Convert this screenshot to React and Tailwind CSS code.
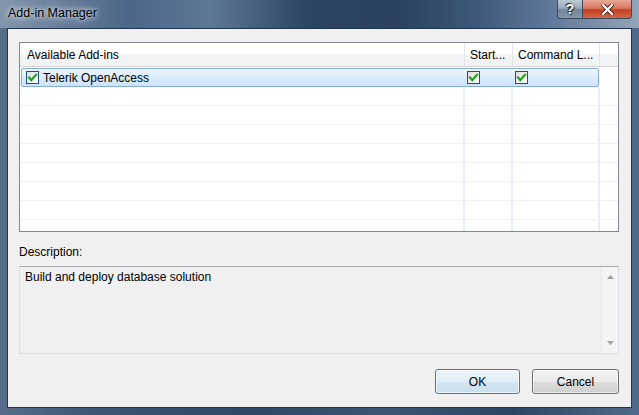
import React from 'react';

const CheckBox = () => (
  <div className="w-[13px] h-[13px] border border-[#1c5180] bg-[linear-gradient(135deg,#dcdcdc,#ffffff)] flex items-center justify-center shrink-0">
    <svg width="11" height="11" viewBox="0 0 11 11">
      <polyline points="2,5.5 4.3,8 9,2.8" fill="none" stroke="#21a121" strokeWidth="2.2" strokeLinecap="square" />
    </svg>
  </div>
);

const EmptyRow = () => (
  <div className="flex h-[19px] border-b border-[#f0f0f0] shrink-0">
    <div className="w-[445px] border-r-2 border-[#e8eef8]" />
    <div className="w-[48px] border-r-2 border-[#e8eef8]" />
    <div className="w-[87px] border-r-2 border-[#e8eef8]" />
    <div className="flex-1" />
  </div>
);

export default function App() {
  return (
    <div className="w-[639px] h-[415px] flex flex-col overflow-hidden text-[12px] text-black font-['Liberation_Sans',Arial,sans-serif] bg-[linear-gradient(90deg,#566d8a_0%,#3c5574_15%,#2f4767_40%,#3b5576_60%,#2d4565_80%,#51698a_100%)]">
      {/* title bar */}
      <div className="h-[28px] flex items-start shrink-0 bg-[linear-gradient(90deg,#8296ac_0%,#6c829d_8%,#4b6686_20%,#5d7797_33%,#2d4565_48%,#2a4161_62%,#3e5979_75%,#60799a_86%,#93a4b8_100%)]">
        <div className="pl-[8px] pt-[6px] leading-[15px] text-[12.5px] [text-shadow:0_0_10px_rgba(255,255,255,0.95),0_0_4px_rgba(255,255,255,0.8)]">
          Add-in Manager
        </div>
        <div className="ml-auto mr-[7px] flex">
          <div className="w-[26px] h-[19px] border border-[#3b4a5c] border-t-0 rounded-bl-[4px] bg-[linear-gradient(180deg,#bfcad6_0%,#9aaabb_45%,#72859a_55%,#8697aa_100%)] flex items-center justify-center">
            <span className="text-white font-bold text-[14px] leading-none [text-shadow:0_0_1px_#1f2c3b,1px_1px_1px_#1f2c3b,-1px_-1px_1px_#1f2c3b]">?</span>
          </div>
          <div className="w-[49px] h-[19px] border border-[#3b4a5c] border-t-0 border-l-0 rounded-br-[4px] bg-[linear-gradient(180deg,#e9a797_0%,#d97a64_45%,#c53f22_55%,#d2674a_100%)] flex items-center justify-center">
            <svg width="13" height="11" viewBox="0 0 13 11">
              <path d="M2 1 L11 10 M11 1 L2 10" stroke="#4a2216" strokeWidth="4" strokeLinecap="square" />
              <path d="M2 1 L11 10 M11 1 L2 10" stroke="#ffffff" strokeWidth="2.2" strokeLinecap="square" />
            </svg>
          </div>
        </div>
      </div>

      {/* client area */}
      <div className="flex-1 mx-[7px] mb-[7px] border border-[#24344a] bg-[#f0f0f0] flex flex-col pl-[11px] pr-[12px] pt-[13px]">
        {/* list view */}
        <div className="w-[600px] h-[190px] border border-[#828790] bg-white flex flex-col overflow-hidden shrink-0">
          <div className="flex h-[24px] border-b border-[#d5d5d5] bg-[linear-gradient(180deg,#ffffff_0%,#ffffff_45%,#f3f4f6_50%,#f1f2f4_100%)] shrink-0">
            <div className="w-[445px] border-r border-[#e3e4e6] pl-[7px] flex items-center">Available Add-ins</div>
            <div className="w-[48px] border-r border-[#e3e4e6] pl-[5px] flex items-center">Start...</div>
            <div className="w-[87px] border-r border-[#e3e4e6] pl-[5px] flex items-center">Command L...</div>
            <div className="flex-1" />
          </div>
          <div className="pt-[1px] flex flex-col">
            <div className="flex h-[19px] shrink-0">
              <div className="ml-[1px] w-[578px] h-[19px] rounded-[2px] border border-[#84acdd] bg-[linear-gradient(180deg,#eef6fe_0%,#dcebfc_50%,#cde3fa_100%)] flex items-center">
                <div className="w-[443px] flex items-center pl-[4px] gap-[4px]">
                  <CheckBox />
                  <span>Telerik OpenAccess</span>
                </div>
                <div className="w-[48px] pl-[2px] flex items-center">
                  <CheckBox />
                </div>
                <div className="pl-[2px] flex items-center">
                  <CheckBox />
                </div>
              </div>
            </div>
            <EmptyRow />
            <EmptyRow />
            <EmptyRow />
            <EmptyRow />
            <EmptyRow />
            <EmptyRow />
            <EmptyRow />
            <EmptyRow />
            <EmptyRow />
          </div>
        </div>

        <div className="mt-[13px] mb-[6px] leading-[15px]">Description:</div>

        {/* description box */}
        <div className="w-[600px] h-[88px] border border-[#dbdfe6] border-t-[#abadb3] flex shrink-0">
          <div className="flex-1 pl-[5px] pt-[3px] leading-[15px]">Build and deploy database solution</div>
          <div className="w-[17px] border-l border-[#e8e8e8] bg-[#f4f4f4] flex flex-col items-center justify-between py-[8px]">
            <svg width="7" height="4" viewBox="0 0 7 4">
              <polygon points="0,4 3.5,0 7,4" fill="#a0a0a0" />
            </svg>
            <svg width="7" height="4" viewBox="0 0 7 4">
              <polygon points="0,0 7,0 3.5,4" fill="#a0a0a0" />
            </svg>
          </div>
        </div>

        {/* buttons */}
        <div className="mt-[15px] flex justify-end gap-[12px]">
          <button className="w-[85px] h-[25px] rounded-[3px] border border-[#3c7fb1] bg-[linear-gradient(180deg,#ecf5fa_0%,#e1eef6_50%,#d3e6f1_51%,#c9dfec_100%)] shadow-[inset_0_0_0_1px_rgba(255,255,255,0.7)] flex items-center justify-center">
            OK
          </button>
          <button className="w-[87px] h-[25px] rounded-[3px] border border-[#707070] bg-[linear-gradient(180deg,#f2f2f2_0%,#ebebeb_50%,#dddddd_51%,#cfcfcf_100%)] shadow-[inset_0_0_0_1px_rgba(255,255,255,0.6)] flex items-center justify-center">
            Cancel
          </button>
        </div>
      </div>
    </div>
  );
}
